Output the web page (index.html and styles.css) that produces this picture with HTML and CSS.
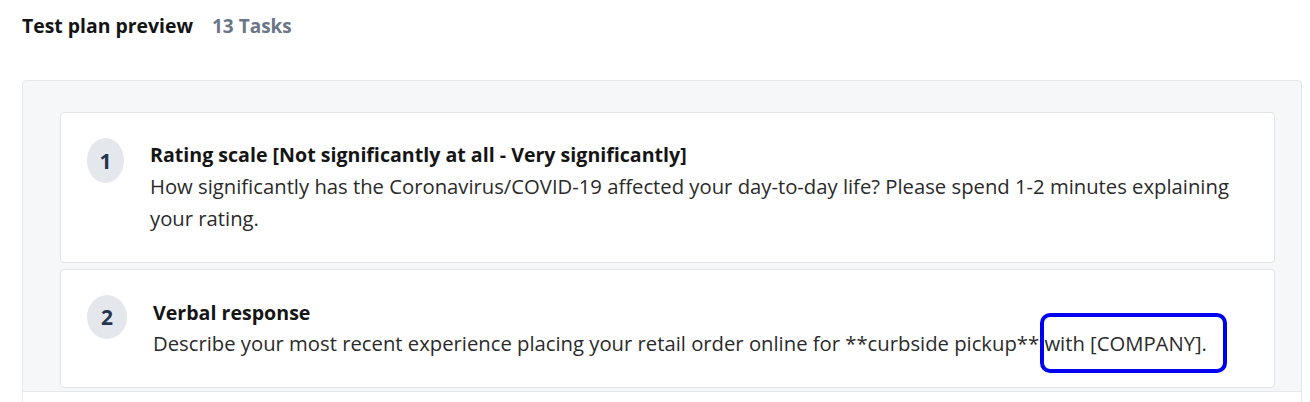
FILE: index.html
```html
<!DOCTYPE html>
<html>
<head>
<meta charset="utf-8">
<link rel="stylesheet" href="styles.css">
</head>
<body>
<div class="page">
  <div class="header">
    <span class="title">Test plan preview</span>
    <span class="count">13 Tasks</span>
  </div>
  <div class="panel">
    <div class="list">
      <div class="card">
        <div class="badge">1</div>
        <div class="body">
          <div class="task-title">Rating scale [Not significantly at all - Very significantly]</div>
          <div class="task-desc">How significantly has the Coronavirus/COVID-19 affected your day-to-day life? Please spend 1-2 minutes explaining your rating.</div>
        </div>
      </div>
      <div class="card card-2">
        <div class="badge badge-wide">2</div>
        <div class="body">
          <div class="task-title">Verbal response</div>
          <div class="task-desc">Describe your most recent experience placing your retail order online for **curbside pickup** with [COMPANY].</div>
        </div>
        <div class="highlight"></div>
      </div>
    </div>
    <div class="footer"></div>
  </div>
</div>
</body>
</html>
```

FILE: styles.css
```css
* { box-sizing: border-box; }
html, body { margin: 0; padding: 0; background: #fff; }
body {
  font-family: "Open Sans", "Lato", sans-serif;
  color: #1c1c1e;
  width: 1310px;
  height: 402px;
  overflow: hidden;
}
.page { padding: 14px 8px 0 22px; }
.header {
  display: flex;
  align-items: baseline;
  gap: 19px;
  height: 24px;
  line-height: 24px;
}
.title { font-weight: 700; font-size: 19.4px; color: #141414; }
.count { font-weight: 700; font-size: 19px; color: #6b7688; }
.panel {
  margin-top: 42px;
  background: #f6f7f9;
  border: 1px solid #e6e8ec;
  border-radius: 4px 4px 0 0;
}
.list {
  padding: 31px 26px 2px 37px;
  display: flex;
  flex-direction: column;
  gap: 6px;
}
.card {
  position: relative;
  background: #fff;
  border: 1px solid #e2e4e8;
  border-radius: 4px;
  display: flex;
  align-items: flex-start;
  padding: 25px 20px 28px 26px;
  gap: 26px;
}
.badge {
  flex: none;
  width: 37px;
  height: 45px;
  border-radius: 50%;
  background: #e4e7ec;
  color: #25344f;
  font-weight: 700;
  font-size: 21px;
  display: flex;
  align-items: center;
  justify-content: center;
}
.badge-wide { width: 40px; height: 44px; }
.body { padding-top: 1px; }
.task-title { font-weight: 700; font-size: 19.6px; line-height: 31px; color: #151515; }
.task-desc { font-size: 20.25px; line-height: 32px; color: #2a2a2a; }
.card-2 .body { padding-top: 2px; }
.card-2 .task-desc { line-height: 31px; }
.highlight {
  position: absolute;
  left: 979px;
  top: 43px;
  width: 187px;
  height: 60px;
  border: 4px solid #0000f0;
  border-radius: 10px;
}
.footer {
  margin-top: 1px;
  height: 20px;
  background: #fff;
  border-top: 1px solid #e6e8ec;
}
```
